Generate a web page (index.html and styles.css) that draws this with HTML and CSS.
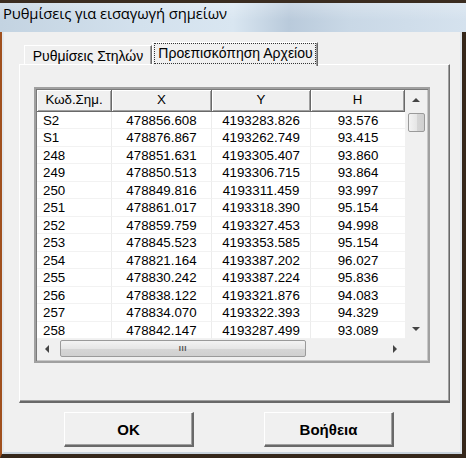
FILE: index.html
```html
<!DOCTYPE html>
<html>
<head>
<meta charset="utf-8">
<link rel="stylesheet" href="styles.css">
</head>
<body>
<div class="window">
  <div class="titlebar"><span class="title">Ρυθμίσεις για εισαγωγή σημείων</span></div>
  <div class="frame">
    <div class="client">
      <div class="tabs">
        <div class="tabstrip">
          <div class="tab">Ρυθμίσεις Στηλών</div>
          <div class="tab sel"><span class="focus">Προεπισκόπηση Αρχείου</span></div>
        </div>
        <div class="panel">
          <div class="grid">
            <div class="gridmain">
              <div class="table">
                <div class="row head">
                  <div class="c c1">Κωδ.Σημ.</div><div class="c c2">X</div><div class="c c3">Y</div><div class="c c4">H</div>
                </div>
                <div class="row"><div class="c c1">S2</div><div class="c c2">478856.608</div><div class="c c3">4193283.826</div><div class="c c4">93.576</div></div>
                <div class="row"><div class="c c1">S1</div><div class="c c2">478876.867</div><div class="c c3">4193262.749</div><div class="c c4">93.415</div></div>
                <div class="row"><div class="c c1">248</div><div class="c c2">478851.631</div><div class="c c3">4193305.407</div><div class="c c4">93.860</div></div>
                <div class="row"><div class="c c1">249</div><div class="c c2">478850.513</div><div class="c c3">4193306.715</div><div class="c c4">93.864</div></div>
                <div class="row"><div class="c c1">250</div><div class="c c2">478849.816</div><div class="c c3">4193311.459</div><div class="c c4">93.997</div></div>
                <div class="row"><div class="c c1">251</div><div class="c c2">478861.017</div><div class="c c3">4193318.390</div><div class="c c4">95.154</div></div>
                <div class="row"><div class="c c1">252</div><div class="c c2">478859.759</div><div class="c c3">4193327.453</div><div class="c c4">94.998</div></div>
                <div class="row"><div class="c c1">253</div><div class="c c2">478845.523</div><div class="c c3">4193353.585</div><div class="c c4">95.154</div></div>
                <div class="row"><div class="c c1">254</div><div class="c c2">478821.164</div><div class="c c3">4193387.202</div><div class="c c4">96.027</div></div>
                <div class="row"><div class="c c1">255</div><div class="c c2">478830.242</div><div class="c c3">4193387.224</div><div class="c c4">95.836</div></div>
                <div class="row"><div class="c c1">256</div><div class="c c2">478838.122</div><div class="c c3">4193321.876</div><div class="c c4">94.083</div></div>
                <div class="row"><div class="c c1">257</div><div class="c c2">478834.070</div><div class="c c3">4193322.393</div><div class="c c4">94.329</div></div>
                <div class="row"><div class="c c1">258</div><div class="c c2">478842.147</div><div class="c c3">4193287.499</div><div class="c c4">93.089</div></div>
              </div>
              <div class="vscroll">
                <div class="arrow up"></div>
                <div class="vtrack"><div class="vthumb"></div></div>
                <div class="arrow down"></div>
              </div>
            </div>
            <div class="hscroll">
              <div class="harrow left"></div>
              <div class="htrack"><div class="hthumb"><span class="grip">III</span></div></div>
              <div class="harrow right"></div>
              <div class="corner"></div>
            </div>
          </div>
        </div>
      </div>
      <div class="buttons">
        <div class="btn">OK</div>
        <div class="btn">Βοήθεια</div>
      </div>
    </div>
  </div>
</div>
</body>
</html>
```
FILE: styles.css
```css
html, body {
  margin: 0;
  padding: 0;
}
body {
  width: 466px;
  height: 458px;
  background: #2e2218;
  overflow: hidden;
  font-family: "Liberation Sans", Arial, sans-serif;
}
.window {
  width: 466px;
  height: 458px;
  display: flex;
  flex-direction: column;
}
.titlebar {
  height: 29px;
  border-top: 3px solid #3a2c20;
  background:
    linear-gradient(to bottom, rgba(255,255,255,0.25), rgba(255,255,255,0) 60%),
    linear-gradient(to right, #c3d3e1 0%, #d3e1ed 30%, #d9e6f1 50%, #b9cadb 62%, #c9d8e6 75%, #d5e2ee 100%);
  display: flex;
  align-items: flex-start;
  padding-left: 3px;
  box-sizing: content-box;
}
.title {
  font-family: "Open Sans", "Noto Sans", sans-serif;
  font-size: 14.8px;
  line-height: 20px;
  color: #000;
  letter-spacing: -0.1px;
  margin-top: 0px;
}
.frame {
  flex: 1;
  display: flex;
  border-left: 2px solid #a0501e;
  border-right: 4px solid #35271b;
  border-bottom: 4px solid #35271b;
}
.client {
  flex: 1;
  background: #f0f0f0;
  display: flex;
  flex-direction: column;
  border-left: 2px solid #e4e8ec;
  border-right: 2px solid #dfe5eb;
  border-bottom: 2px solid #c9d3dd;
}
.tabs {
  padding: 10px 0 0 15px;
}
.tabstrip {
  height: 22px;
  display: flex;
  align-items: flex-end;
  padding-left: 5px;
  position: relative;
  z-index: 1;
}
.tab {
  height: 19px;
  width: 128px;
  box-sizing: border-box;
  border-top: 1px solid #fff;
  border-left: 1px solid #fff;
  border-right: 1px solid #696969;
  box-shadow: inset -1px 0 #a0a0a0;
  font-size: 14px;
  color: #000;
  display: flex;
  align-items: center;
  justify-content: center;
  padding-top: 2px;
}
.tab.sel {
  width: 166px;
  height: 24px;
  margin-bottom: -2px;
  background: #f0f0f0;
  padding-top: 0;
  padding-bottom: 2px;
}
.focus {
  border: 1px dotted #333;
  padding: 1px 2px 2px 3px;
  line-height: 16px;
}
.panel {
  width: 431px;
  height: 339px;
  box-sizing: border-box;
  border-top: 1px solid #fff;
  border-left: 1px solid #fff;
  border-right: 1px solid #696969;
  border-bottom: 2px solid #696969;
  box-shadow: inset -1px -1px #a0a0a0;
  padding: 22px 0 0 14px;
}
.grid {
  width: 396px;
  height: 276px;
  box-sizing: border-box;
  border: 2px solid #a0a0a0;
  box-shadow: inset 1px 1px #7a7a7a, inset -1px -1px #c8c8c8;
  padding: 1px;
  background: #f0f0f0;
  display: flex;
  flex-direction: column;
}
.gridmain {
  display: flex;
  height: 249px;
}
.table {
  width: 368px;
  background: #fff;
  display: flex;
  flex-direction: column;
}
.row {
  display: flex;
  height: 17.5px;
  font-size: 13.3px;
  line-height: 17px;
  color: #000;
}
.row .c {
  box-sizing: border-box;
  border-right: 1px solid #ececec;
  border-bottom: 1px solid #f2f2f2;
  text-align: center;
  white-space: nowrap;
  overflow: hidden;
}
.row .c1 { width: 75px; text-align: left; padding-left: 6px; }
.row .c2 { width: 100px; }
.row .c3 { width: 99px; }
.row .c4 { width: 94px; border-right: none; }
.row.head {
  height: 21.5px;
  background: #f0f0f0;
}
.row.head .c {
  line-height: 20px;
  border-right: 1px solid #696969;
  border-bottom: 1px solid #696969;
  box-shadow: inset 1px 1px #fff, inset -1px -1px #a0a0a0;
}
.row.head .c1 { text-align: center; padding-left: 0; }
.vscroll {
  width: 22px;
  display: flex;
  flex-direction: column;
  align-items: center;
  background: #f0f0f0;
}
.arrow {
  height: 20px;
  width: 17px;
  display: flex;
  align-items: center;
  justify-content: center;
}
.arrow::before {
  content: "";
  border-left: 4px solid transparent;
  border-right: 4px solid transparent;
}
.arrow.up::before { border-bottom: 4px solid #444; }
.arrow.down::before { border-top: 4px solid #444; }
.vtrack {
  flex: 1;
  width: 17px;
  padding-top: 3px;
}
.vthumb {
  width: 17px;
  height: 19px;
  box-sizing: border-box;
  border: 1px solid #9a9a9a;
  border-radius: 2px;
  background: linear-gradient(to right, #f3f3f3, #e6e6e6 50%, #d6d6d6 51%, #d0d0d0);
}
.hscroll {
  display: flex;
  height: 19px;
  align-items: center;
}
.harrow {
  width: 21px;
  height: 17px;
  display: flex;
  align-items: center;
  justify-content: center;
}
.harrow::before {
  content: "";
  border-top: 4px solid transparent;
  border-bottom: 4px solid transparent;
}
.harrow.left::before { border-right: 4px solid #444; }
.harrow.right::before { border-left: 4px solid #444; }
.htrack {
  width: 326px;
  height: 17px;
  padding-left: 2px;
}
.hthumb {
  width: 246px;
  height: 17px;
  box-sizing: border-box;
  border: 1px solid #9a9a9a;
  border-radius: 2px;
  background: linear-gradient(to bottom, #f3f3f3, #e6e6e6 50%, #d6d6d6 51%, #d0d0d0);
  display: flex;
  align-items: center;
  justify-content: center;
}
.grip {
  font-size: 8px;
  letter-spacing: 0.5px;
  color: #555;
  font-weight: bold;
  line-height: 8px;
}
.corner {
  width: 22px;
  height: 19px;
}
.buttons {
  display: flex;
  padding: 9px 0 0 60px;
  gap: 70px;
}
.btn {
  width: 130px;
  height: 35px;
  box-sizing: border-box;
  background: #f0f0f0;
  border-top: 1px solid #fff;
  border-left: 1px solid #fff;
  border-right: 2px solid #696969;
  border-bottom: 2px solid #696969;
  box-shadow: inset -1px -1px #a0a0a0;
  display: flex;
  align-items: center;
  justify-content: center;
  font-weight: bold;
  font-size: 15px;
  color: #000;
}
```
